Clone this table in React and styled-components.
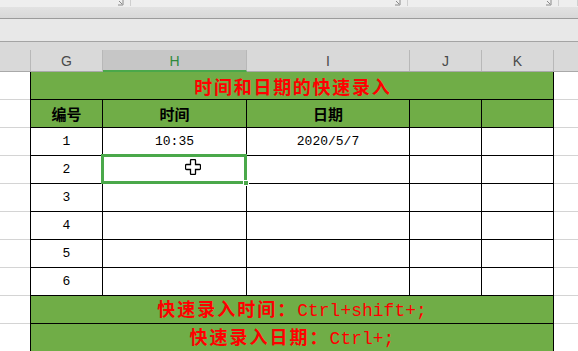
import styled, { createGlobalStyle } from 'styled-components';

/* 表格列定义：宽度包含右边框 */
const COLS = [
  { id: 'G', w: 73 },
  { id: 'H', w: 144 },
  { id: 'I', w: 163 },
  { id: 'J', w: 72 },
  { id: 'K', w: 72 },
];

const TABLE_W = COLS.reduce((s, c) => s + c.w, 0);

const DATA = [
  ['1', '10:35', '2020/5/7'],
  ['2', '', ''],
  ['3', '', ''],
  ['4', '', ''],
  ['5', '', ''],
  ['6', '', ''],
];

/* 功能区分组：右端带对话框启动器 */
const RIBBON_GROUPS = [131, 277, 151, 19];

export default function App() {
  return (
    <Page>
      <GlobalStyle />

      {/* ── 功能区底部 ── */}
      <RibbonStrip>
        {RIBBON_GROUPS.map((w, i) => (
          <RibbonGroup key={i} style={{ width: w }}>
            {i < 3 && <Launcher />}
          </RibbonGroup>
        ))}
      </RibbonStrip>
      <RibbonShade />

      {/* ── 编辑栏 ── */}
      <FormulaBar />

      {/* ── 列标题 ── */}
      <HeaderGap />
      <ColHeaderRow>
        <CornerCell />
        {COLS.map((c) => (
          <ColHeader key={c.id} $w={c.w} $active={c.id === 'H'}>
            {c.id}
          </ColHeader>
        ))}
        <ColHeaderRest />
      </ColHeaderRow>

      {/* ── 工作表 ── */}
      <Sheet>
        <Row>
          <Gutter />
          <Merged $first>
            <TitleText>时间和日期的快速录入</TitleText>
          </Merged>
          <Gutter $rest />
        </Row>

        <Row>
          <Gutter />
          {['编号', '时间', '日期', '', ''].map((t, i) => (
            <Cell key={i} $w={COLS[i].w} $first={i === 0} $green>
              <HeadText>{t}</HeadText>
            </Cell>
          ))}
          <Gutter $rest />
        </Row>

        {DATA.map((r, ri) => (
          <Row key={ri}>
            <Gutter />
            {COLS.map((c, i) => (
              <Cell key={c.id} $w={c.w} $first={i === 0} $selected={ri === 1 && i === 1}>
                <ValueText>{r[i] || ''}</ValueText>
                {ri === 1 && i === 1 && (
                  <>
                    <FillHandle />
                    <Cursor viewBox="0 0 16 16" width="16" height="16">
                      <path
                        d="M5.5 1.5 Q5.5 0.5 6.5 0.5 H9.5 Q10.5 0.5 10.5 1.5 V5.5 H14.5 Q15.5 5.5 15.5 6.5 V9.5 Q15.5 10.5 14.5 10.5 H10.5 V14.5 Q10.5 15.5 9.5 15.5 H6.5 Q5.5 15.5 5.5 14.5 V10.5 H1.5 Q0.5 10.5 0.5 9.5 V6.5 Q0.5 5.5 1.5 5.5 H5.5 Z"
                        fill="#fff"
                        stroke="#000"
                        strokeWidth="1.3"
                      />
                    </Cursor>
                  </>
                )}
              </Cell>
            ))}
            <Gutter $rest />
          </Row>
        ))}

        <Row>
          <Gutter />
          <Merged $first>
            <NoteText>
              <Cjk>快速录入时间：</Cjk>
              <Mono>Ctrl+shift+;</Mono>
            </NoteText>
          </Merged>
          <Gutter $rest />
        </Row>
        <Row>
          <Gutter />
          <Merged $first>
            <NoteText>
              <Cjk>快速录入日期：</Cjk>
              <Mono>Ctrl+;</Mono>
            </NoteText>
          </Merged>
          <Gutter $rest />
        </Row>
      </Sheet>
    </Page>
  );
}

function Launcher() {
  return (
    <LauncherIcon viewBox="0 0 7 6" width="7" height="6">
      <path d="M6 0 V5 H1" fill="none" stroke="#8a8a8a" strokeWidth="1" />
      <path d="M2 1 L5 4" stroke="#8a8a8a" strokeWidth="1" />
    </LauncherIcon>
  );
}

/* ── styled-components ── */

const GlobalStyle = createGlobalStyle`
  html, body {
    margin: 0;
    padding: 0;
    background: #fff;
    overflow: hidden;
  }
  * { box-sizing: border-box; }
`;

const Page = styled.div`
  width: 578px;
  height: 351px;
  overflow: hidden;
  font-family: "Liberation Sans", "Noto Sans CJK SC", sans-serif;
`;

const RibbonStrip = styled.div`
  display: flex;
  height: 7px;
  background: #eeeeee;
`;

const RibbonGroup = styled.div`
  display: flex;
  justify-content: flex-end;
  align-items: flex-start;
  padding-right: 6px;
  border-right: 1px solid #cfcfcf;
  height: 6px;
`;

const LauncherIcon = styled.svg`
  display: block;
`;

const RibbonShade = styled.div`
  height: 12px;
  background: linear-gradient(#e2e2e2, #d8d8d8);
  border-bottom: 1px solid #9b9b9b;
`;

const FormulaBar = styled.div`
  height: 23px;
  background: #e8e8e8;
  border-bottom: 1px solid #a4a4a4;
`;

const HeaderGap = styled.div`
  height: 8px;
  background: #d9d9d9;
`;

const ColHeaderRow = styled.div`
  display: flex;
  height: 22px;
  background: #d9d9d9;
  border-bottom: 1px solid #a9a9a9;
`;

const CornerCell = styled.div`
  width: 31px;
  border-right: 1px solid #b8b8b8;
`;

const ColHeader = styled.div`
  width: ${({ $w }) => ($w === 73 ? 72 : $w)}px;
  display: flex;
  align-items: center;
  justify-content: center;
  font-size: 14px;
  color: ${({ $active }) => ($active ? '#2f8a3c' : '#4a4a4a')};
  background: ${({ $active }) => ($active ? '#c6c6c6' : 'transparent')};
  border-right: 1px solid #b8b8b8;
  border-bottom: ${({ $active }) => ($active ? '2px solid #4aa84a' : 'none')};
  margin-bottom: ${({ $active }) => ($active ? '-1px' : '0')};
  padding-top: ${({ $active }) => ($active ? '1px' : '0')};
`;

const ColHeaderRest = styled.div`
  flex: 1;
`;

const Sheet = styled.div`
  display: flex;
  flex-direction: column;
`;

const Row = styled.div`
  display: flex;
  height: 28px;
`;

const Gutter = styled.div`
  width: ${({ $rest }) => ($rest ? 'auto' : '30px')};
  flex: ${({ $rest }) => ($rest ? 1 : 'none')};
  border-bottom: 1px solid #d4d4d4;
`;

const Cell = styled.div`
  position: relative;
  width: ${({ $w }) => $w}px;
  display: flex;
  align-items: center;
  justify-content: center;
  background: ${({ $green }) => ($green ? '#70ad47' : '#fff')};
  border-right: 1px solid #000;
  border-bottom: 1px solid #000;
  border-left: ${({ $first }) => ($first ? '1px solid #000' : 'none')};

  ${({ $selected }) =>
    $selected &&
    `
    &::after {
      content: '';
      position: absolute;
      left: -2px;
      top: -2px;
      right: -1px;
      bottom: -1px;
      border: 3px solid #4aa84a;
      pointer-events: none;
    }
  `}
`;

const Merged = styled(Cell).attrs({ $w: TABLE_W, $green: true })``;

const FillHandle = styled.div`
  position: absolute;
  right: -3px;
  bottom: -3px;
  width: 6px;
  height: 6px;
  background: #4aa84a;
  border: 1px solid #fff;
  z-index: 2;
`;

const Cursor = styled.svg`
  position: absolute;
  left: 82px;
  top: 3px;
  z-index: 3;
`;

const TitleText = styled.span`
  font-family: "Noto Sans CJK SC", sans-serif;
  font-size: 18px;
  font-weight: 700;
  letter-spacing: 1.7px;
  color: #ff0000;
  line-height: 1;
  margin-right: -1.7px;
`;

const HeadText = styled.span`
  font-family: "Noto Sans CJK SC", sans-serif;
  font-size: 15px;
  font-weight: 700;
  color: #000;
  line-height: 1;
`;

const ValueText = styled.span`
  font-family: "Liberation Mono", monospace;
  font-size: 13px;
  color: #000;
  line-height: 1;
`;

const NoteText = styled.span`
  display: flex;
  align-items: baseline;
  color: #ff0000;
  line-height: 1;
`;

const Cjk = styled.span`
  font-family: "Noto Sans CJK SC", sans-serif;
  font-size: 18px;
  font-weight: 700;
  letter-spacing: 2px;
`;

const Mono = styled.span`
  font-family: "Liberation Mono", monospace;
  font-size: 18px;
`;
